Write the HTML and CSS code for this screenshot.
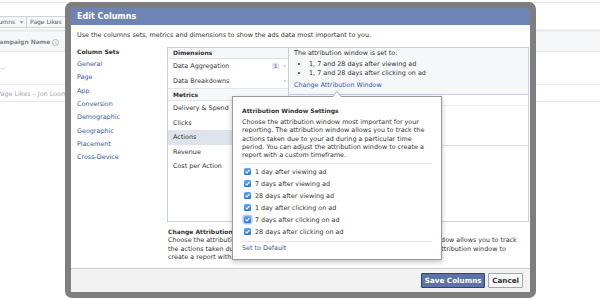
FILE: index.html
```html
<!DOCTYPE html>
<html lang="en">
<head>
    <meta charset="UTF-8">
    <meta name="viewport" content="width=device-width, initial-scale=1.0">
    <title>Edit Columns</title>
    <link rel="stylesheet" href="styles.css">
</head>
<body>
    <div class="page">
        <div class="toolbar">
            <span class="tb-btn first">Columns <span class="caret">▾</span></span>
            <span class="tb-btn">Page Likes</span>
        </div>
        <div class="grid-head">Campaign Name <span class="info">i</span></div>
        <div class="grid-row dash">–</div>
        <div class="grid-row muted">Page Likes – Jon Loomer</div>
    </div>

    <div class="dialog">
        <div class="dialog-title">Edit Columns</div>
        <div class="dialog-body">
            <p class="intro">Use the columns sets, metrics and dimensions to show the ads data most important to you.</p>
            <div class="columns">
                <div class="sets">
                    <div class="sets-title">Column Sets</div>
                    <a class="set-link">General</a>
                    <a class="set-link">Page</a>
                    <a class="set-link">App</a>
                    <a class="set-link">Conversion</a>
                    <a class="set-link">Demographic</a>
                    <a class="set-link">Geographic</a>
                    <a class="set-link">Placement</a>
                    <a class="set-link">Cross-Device</a>
                </div>
                <div class="editor">
                    <div class="picker">
                        <ul class="cat-list">
                            <li class="cat-head">Dimensions</li>
                            <li class="cat-item">Data Aggregation <span class="count">1</span><span class="chev">›</span></li>
                            <li class="cat-item">Data Breakdowns <span class="chev">›</span></li>
                            <li class="cat-head second">Metrics</li>
                            <li class="cat-item">Delivery &amp; Spend</li>
                            <li class="cat-item">Clicks</li>
                            <li class="cat-item active">Actions</li>
                            <li class="cat-item">Revenue</li>
                            <li class="cat-item">Cost per Action</li>
                        </ul>
                        <div class="detail">
                            <div class="attr-box">
                                <div>The attribution window is set to:</div>
                                <ul class="attr-list">
                                    <li>1, 7 and 28 days after viewing ad</li>
                                    <li>1, 7 and 28 days after clicking on ad</li>
                                </ul>
                                <a class="link">Change Attribution Window</a>
                            </div>
                            <div class="detail-row"></div>
                            <div class="detail-row tall"></div>
                        </div>
                    </div>
                    <div class="help">
                        <div class="help-title">Change Attribution Window</div>
                        <p>Choose the attribution window most important for your reporting. The attribution window allows you to track<br>the actions taken due to your ad during a particular time period. You can adjust the attribution window to<br>create a report with a custom timeframe.</p>
                    </div>
                </div>
            </div>
        </div>
        <div class="dialog-foot">
            <button class="btn primary">Save Columns</button>
            <button class="btn">Cancel</button>
        </div>

        <div class="popover">
            <div class="pop-title">Attribution Window Settings</div>
            <p class="pop-text">Choose the attribution window most important for your<br>reporting. The attribution window allows you to track the<br>actions taken due to your ad during a particular time<br>period. You can adjust the attribution window to create a<br>report with a custom timeframe.</p>
            <ul class="checks">
                <li><span class="cb"><svg viewBox="0 0 8 8"><path d="M1.8 4.2 3.3 5.7 6.2 2.4" /></svg></span>1 day after viewing ad</li>
                <li><span class="cb"><svg viewBox="0 0 8 8"><path d="M1.8 4.2 3.3 5.7 6.2 2.4" /></svg></span>7 days after viewing ad</li>
                <li><span class="cb"><svg viewBox="0 0 8 8"><path d="M1.8 4.2 3.3 5.7 6.2 2.4" /></svg></span>28 days after viewing ad</li>
                <li><span class="cb"><svg viewBox="0 0 8 8"><path d="M1.8 4.2 3.3 5.7 6.2 2.4" /></svg></span>1 day after clicking on ad</li>
                <li><span class="cb focus"><svg viewBox="0 0 8 8"><path d="M1.8 4.2 3.3 5.7 6.2 2.4" /></svg></span>7 days after clicking on ad</li>
                <li><span class="cb"><svg viewBox="0 0 8 8"><path d="M1.8 4.2 3.3 5.7 6.2 2.4" /></svg></span>28 days after clicking on ad</li>
            </ul>
            <a class="link reset">Set to Default</a>
        </div>
    </div>
</body>
</html>
```

FILE: styles.css
```css
:root {
    --link-color: #3b5998;
    --text-color: #333;
    --line-color: #c9d0dd;
    --soft-bg: #f6f7f9;
}
body {
    margin: 0;
    font-family: "DejaVu Sans", sans-serif;
    font-size: 6.4px;
    color: var(--text-color);
    background: #fff;
    width: 600px;
    height: 300px;
    overflow: hidden;
    position: relative;
}
a {
    color: var(--link-color);
    text-decoration: none;
}
ul {
    margin: 0;
    padding: 0;
    list-style: none;
}
p {
    margin: 0;
}

/* page behind the dialog */
.page {
    margin-top: 2px;
    border-top: 1px solid #e9eaed;
}
.toolbar {
    height: 29px;
    display: flex;
    align-items: flex-start;
    padding-top: 13px;
    box-sizing: border-box;
    border-bottom: 3px solid #ebedf0;
    font-size: 6px;
}
.tb-btn {
    height: 10px;
    line-height: 10px;
    padding: 0 3px;
    border: 1px solid #cfd2d8;
    background: var(--soft-bg);
    color: #4e5665;
    white-space: nowrap;
}
.tb-btn.first {
    margin-left: -15px;
}
.tb-btn + .tb-btn {
    border-left: none;
}
.caret {
    color: #8a93a3;
    margin-left: 3px;
}
.grid-head {
    height: 19px;
    line-height: 19px;
    background: #f6f7f8;
    border-bottom: 1px solid #e5e6e9;
    color: #7f8590;
    font-weight: bold;
    font-size: 6px;
    margin-left: -5px;
    white-space: nowrap;
}
.info {
    display: inline-block;
    width: 5px;
    height: 5px;
    line-height: 5px;
    border: 1px solid #b0b4bb;
    border-radius: 50%;
    font-size: 4px;
    text-align: center;
    color: #b0b4bb;
    vertical-align: middle;
}
.grid-row {
    border-bottom: 1px solid #e9eaed;
    color: #999;
    white-space: nowrap;
}
.grid-row.dash {
    height: 32px;
    line-height: 32px;
    padding-left: 1px;
}
.grid-row.muted {
    height: 16px;
    line-height: 18px;
    color: #9ea5b4;
    margin-left: -3px;
}

/* dialog */
.dialog {
    position: absolute;
    left: 65px;
    top: 2px;
    width: 459px;
    height: 284px;
    border: 6px solid rgba(90, 90, 90, 0.78);
    border-radius: 7px;
    background: #fff;
    display: flex;
    flex-direction: column;
}
.dialog-title {
    height: 17px;
    line-height: 17px;
    padding-left: 6px;
    background: #6d84b4;
    color: #fff;
    font-size: 8px;
    font-weight: bold;
}
.dialog-body {
    height: 243px;
    padding: 6px 1px 0 6px;
    box-sizing: border-box;
}
.intro {
    line-height: 9px;
}
.columns {
    display: flex;
    margin-top: 7px;
}
.sets {
    width: 90px;
    display: flex;
    flex-direction: column;
}
.sets-title {
    font-weight: bold;
    font-size: 6px;
    line-height: 9px;
    margin-bottom: 2px;
}
.set-link {
    line-height: 13.33px;
    height: 13.33px;
}
.editor {
    width: 362px;
}
.picker {
    height: 175px;
    box-sizing: border-box;
    border: 1px solid var(--line-color);
    display: flex;
}
.cat-list {
    width: 120px;
    border-right: 1px solid var(--line-color);
}
.cat-head {
    height: 10px;
    line-height: 10px;
    padding-left: 5px;
    font-weight: bold;
    font-size: 6px;
    background: var(--soft-bg);
    border-bottom: 1px solid #e1e4ea;
}
.cat-head.second {
    height: 11px;
    line-height: 12px;
    border-top: 1px solid #e1e4ea;
}
.cat-item {
    height: 14.5px;
    line-height: 14.5px;
    padding: 0 2px 0 5px;
    display: flex;
    align-items: center;
    white-space: nowrap;
}
.cat-item.active {
    background: #dfe3ec;
}
.count {
    margin-left: auto;
    width: 7px;
    height: 6px;
    line-height: 6px;
    text-align: center;
    font-size: 5px;
    background: #dfe4ee;
    color: var(--link-color);
    border-radius: 1px;
}
.chev {
    margin-left: auto;
    color: #999;
    font-size: 7px;
}
.count + .chev {
    margin-left: 4px;
}
.detail {
    flex: 1;
}
.attr-box {
    height: 47px;
    padding: 1px 0 0 5px;
    line-height: 9px;
    background: #f6f7f9;
    border-bottom: 1px solid #c6cedb;
    box-sizing: border-box;
}
.attr-list {
    margin-top: 2px;
    line-height: 8.7px;
    list-style: disc;
    padding-left: 15px;
}
.attr-box .link {
    display: block;
    margin-top: 4px;
}
.detail-row {
    height: 10px;
    border-bottom: 1px solid #eceef1;
}
.detail-row.tall {
    height: 39px;
    border-bottom-color: #d8deea;
}
.help {
    margin-top: 6px;
    padding-left: 1px;
    line-height: 8.3px;
    white-space: nowrap;
}
.help-title {
    font-weight: bold;
    font-size: 6px;
}

/* footer */
.dialog-foot {
    height: 23px;
    border-top: 1px solid #ccc;
    background: #f2f2f2;
    display: flex;
    justify-content: flex-end;
    align-items: center;
    gap: 3px;
    padding-right: 7px;
}
.btn {
    height: 15px;
    padding: 0 3px;
    font-family: "DejaVu Sans", sans-serif;
    font-size: 7.2px;
    font-weight: bold;
    white-space: nowrap;
    border: 1px solid #a3a6ab;
    background: var(--soft-bg);
    color: #333;
    border-radius: 1px;
}
.btn.primary {
    width: 64px;
    padding: 0;
    background: #5b74a8;
    border-color: #29447e;
    color: #fff;
}

/* attribution popover */
.popover {
    position: absolute;
    left: 161px;
    top: 88px;
    width: 210px;
    height: 164px;
    box-sizing: border-box;
    padding: 9px 0 0 9px;
    background: #fff;
    border: 1px solid #9a9a9a;
    box-shadow: 0 2px 5px rgba(0, 0, 0, 0.25);
}
.popover::before,
.popover::after {
    content: "";
    position: absolute;
    left: 99px;
    border: 5px solid transparent;
    border-top: none;
}
.popover::before {
    top: -6px;
    border-bottom: 6px solid #a0a7b4;
}
.popover::after {
    top: -5px;
    left: 100px;
    border-width: 0 4px 5px;
    border-bottom-color: #fff;
}
.pop-title {
    font-weight: bold;
    font-size: 6px;
    line-height: 9px;
}
.pop-text {
    margin-top: 3px;
    line-height: 8.35px;
    padding-bottom: 3px;
    margin-right: 9px;
    border-bottom: 1px solid #e5e5e5;
    white-space: nowrap;
}
.checks {
    margin: 2px 9px 0 0;
    padding-bottom: 3px;
    border-bottom: 1px solid #e5e5e5;
}
.checks li {
    height: 12px;
    display: flex;
    align-items: center;
    gap: 4px;
    padding-left: 2px;
}
.cb {
    width: 7px;
    height: 7px;
    border-radius: 1.5px;
    background: linear-gradient(#62a6f6, #2f72de);
    display: inline-flex;
}
.cb.focus {
    box-shadow: 0 0 0 1.5px rgba(110, 160, 235, 0.55);
}
.cb svg {
    width: 7px;
    height: 7px;
    fill: none;
    stroke: #fff;
    stroke-width: 1.3;
}
.reset {
    display: block;
    margin-top: 2px;
    line-height: 8px;
}
```
